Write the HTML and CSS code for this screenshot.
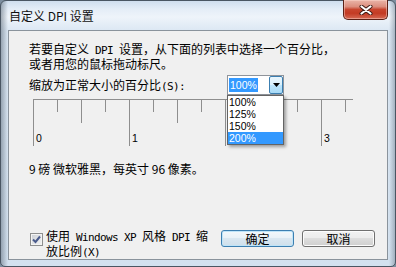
FILE: index.html
```html
<!DOCTYPE html>
<html lang="zh-CN">
<head>
<meta charset="utf-8">
<title>自定义 DPI 设置</title>
<link rel="stylesheet" href="styles.css">
</head>
<body>
<div class="window">
  <div class="titlebar">
    <span class="title">自定义 DPI 设置</span>
    <button class="close" aria-label="关闭">
      <svg width="14" height="10" viewBox="0 0 14 10">
        <path d="M2.5 1.5L11.5 8.5M11.5 1.5L2.5 8.5" stroke="#3b1a14" stroke-width="4" stroke-linecap="round"/>
        <path d="M2.5 1.5L11.5 8.5M11.5 1.5L2.5 8.5" stroke="#ffffff" stroke-width="2.2" stroke-linecap="round"/>
      </svg>
    </button>
  </div>
  <div class="client">
    <p class="intro">若要自定义<span class="m"> DPI </span>设置，从下面的列表中选择一个百分比，或者用您的鼠标拖动标尺。</p>
    <div class="scale-row">
      <label class="scale-label">缩放为正常大小的百分比<span class="m">(S):</span></label>
      <div class="combo">
        <span class="combo-value"><span class="sel">100%</span></span>
        <span class="combo-btn">
          <svg width="7" height="4" viewBox="0 0 7 4"><path d="M0 0H7L3.5 4Z" fill="#000"/></svg>
        </span>
        <ul class="combo-list">
          <li>100%</li>
          <li>125%</li>
          <li>150%</li>
          <li class="hl">200%</li>
        </ul>
      </div>
    </div>
    <svg class="ruler" width="322" height="47" viewBox="0 0 322 47">
      <path d="M0.5 0.5H320M0.5 0V47M24.5 0V13M48.5 0V24M72.5 0V13M96.5 0V47M120.5 0V13M144.5 0V24M168.5 0V13M192.5 0V47M216.5 0V13M240.5 0V24M264.5 0V13M288.5 0V47M312.5 0V13" stroke="#8e8e8e" stroke-width="1" fill="none"/>
      <text x="3" y="43">0</text>
      <text x="99" y="43">1</text>
      <text x="195" y="43">2</text>
      <text x="291" y="43">3</text>
    </svg>
    <p class="info">9 磅 微软雅黑，每英寸 96 像素。</p>
    <div class="bottom">
      <label class="xp">
        <span class="check">
          <svg width="11" height="11" viewBox="0 0 11 11"><path d="M2 5.5L4.5 8L9 2.5" stroke="#4a5b8c" stroke-width="2" fill="none"/></svg>
        </span>
        <span class="xp-text">使用<span class="m"> Windows XP </span>风格<span class="m"> DPI </span>缩放比例<span class="m">(X)</span></span>
      </label>
      <div class="buttons">
        <button class="btn default">确定</button>
        <button class="btn">取消</button>
      </div>
    </div>
  </div>
</div>
</body>
</html>
```
FILE: styles.css
```css
* { box-sizing: border-box; }
html, body { margin: 0; padding: 0; }
body {
  width: 396px;
  height: 267px;
  overflow: hidden;
  background: #7d8e9f;
  font-family: "Noto Sans CJK SC", sans-serif;
  font-size: 12px;
  color: #000;
}
.window {
  width: 396px;
  height: 267px;
  border: 1px solid #4a5663;
  border-radius: 6px 6px 5px 5px;
  background:
    linear-gradient(90deg, rgba(70,85,100,0.45) 0px, rgba(70,85,100,0) 7px, rgba(70,85,100,0) 388px, rgba(70,85,100,0.35) 394px),
    linear-gradient(180deg, #cfdeee 0px, #e4edf7 8px, #eef4fa 16px, #dbe7f3 30px, #d3e1ef 100%);
  display: flex;
  flex-direction: column;
}
.titlebar {
  height: 29px;
  display: flex;
  align-items: flex-start;
  padding-left: 8px;
}
.title {
  line-height: 30px;
  font-size: 12px;
  color: #111;
}
.close {
  margin: -1px 7px 0 auto;
  width: 45px;
  height: 20px;
  padding: 0;
  border: 1px solid #5b2016;
  border-top: none;
  border-radius: 0 0 5px 5px;
  background: linear-gradient(180deg, #eab5a8 0%, #dc8e7e 35%, #c8452e 50%, #c33b24 70%, #d66a55 100%);
  box-shadow: inset 0 0 0 1px rgba(255,220,210,0.45);
  display: flex;
  align-items: center;
  justify-content: center;
}
.close svg { display: block; }
.client {
  margin: 0 7px 6px 7px;
  height: 230px;
  background: #f0f0f0;
  border: 1px solid #8a939c;
  padding: 11px 12px 0 20px;
}
.m {
  font-family: "DejaVu Sans Mono", monospace;
  font-size: 11px;
  letter-spacing: -0.62px;
}
.intro {
  margin: 0;
  width: 312px;
  line-height: 13px;
}
.scale-row {
  margin-top: 5px;
  height: 20px;
  display: flex;
  align-items: center;
}
.scale-label {
  width: 198px;
  line-height: 13px;
}
.combo {
  position: relative;
  width: 57px;
  height: 20px;
  border: 1px solid #8f949b;
  background: #fff;
  display: flex;
  align-items: center;
}
.combo-value {
  flex: 1;
  padding-left: 1px;
  font-family: "Liberation Sans", sans-serif;
  font-size: 10.5px;
  line-height: 14px;
}
.sel {
  background: #3399ff;
  color: #fff;
  padding: 1px 1px;
}
.combo-btn {
  width: 14px;
  height: 18px;
  border: 1px solid #3c7fb1;
  border-radius: 2px;
  background: linear-gradient(180deg, #eaf6fd 0%, #d9f0fc 50%, #bee6fd 50%, #a7d9f5 100%);
  display: flex;
  align-items: center;
  justify-content: center;
}
.combo-btn svg { display: block; }
.combo-list {
  position: absolute;
  top: 19px;
  left: -1px;
  width: 57px;
  margin: 0;
  padding: 0;
  list-style: none;
  background: #fff;
  border: 1px solid #646464;
  box-shadow: 2px 2px 3px rgba(0,0,0,0.35);
  font-family: "Liberation Sans", sans-serif;
  font-size: 10.5px;
}
.combo-list li {
  height: 12px;
  line-height: 12px;
  padding-left: 1px;
}
.combo-list li.hl {
  background: #3399ff;
  color: #fff;
}
.ruler {
  display: block;
  margin: 4px 0 0 4px;
  font-family: "Liberation Sans", sans-serif;
  font-size: 10.5px;
}
.ruler text { fill: #000; }
.info {
  margin: 16px 0 0 0;
  line-height: 13px;
}
.bottom {
  margin-top: 54px;
  display: flex;
  justify-content: space-between;
  align-items: flex-start;
}
.xp {
  display: flex;
  align-items: flex-start;
}
.check {
  margin: 4px 3px 0 1px;
  width: 13px;
  height: 13px;
  border: 1px solid #8e8f8f;
  background: linear-gradient(135deg, #cbcfd5 0%, #f4f4f4 100%);
  box-shadow: inset 0 0 0 1px #f4f4f4;
  display: flex;
  align-items: center;
  justify-content: center;
}
.check svg { display: block; }
.xp-text {
  width: 170px;
  line-height: 13px;
}
.buttons {
  display: flex;
  gap: 8px;
  margin-top: 1px;
}
.btn {
  width: 73px;
  height: 17px;
  padding: 0;
  border: 1px solid #707070;
  border-radius: 3px;
  background: linear-gradient(180deg, #f2f2f2 0%, #ebebeb 50%, #dddddd 50%, #cfcfcf 100%);
  box-shadow: inset 0 0 0 1px #fcfcfc;
  font-family: "Noto Sans CJK SC", sans-serif;
  font-size: 12px;
  line-height: 15px;
  color: #000;
}
.btn.default {
  border-color: #3c7fb1;
  box-shadow: inset 0 0 0 1px #bfe4f8;
  background: linear-gradient(180deg, #f3f8fb 0%, #e8f1f7 50%, #d9e7f1 50%, #cfdfeb 100%);
}
```
